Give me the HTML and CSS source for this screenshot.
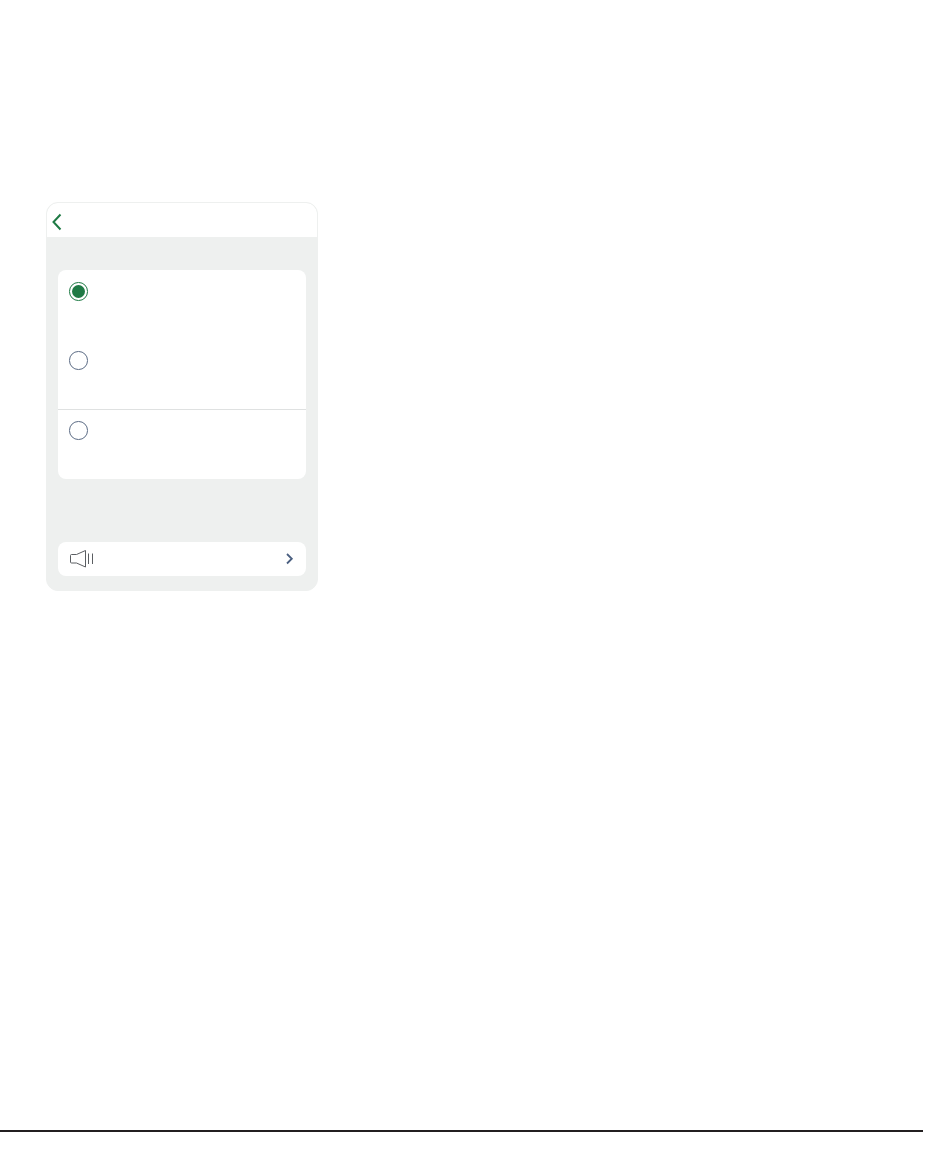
FILE: index.html
```html
<!DOCTYPE html>
<html lang="en">
<head>
<meta charset="utf-8">
<title>Settings</title>
<link rel="stylesheet" href="styles.css">
</head>
<body>
<main class="page">
  <section class="phone">
    <header class="phone-head">
      <svg class="back" width="12" height="18" viewBox="0 0 12 18"><path d="M9.5 1.5 L2.5 9 L9.5 16.5" fill="none" stroke="#1f7a45" stroke-width="2"/></svg>
    </header>
    <div class="phone-body">
      <div class="panel options">
        <div class="option"><span class="radio radio-on"></span></div>
        <div class="option option-mid"><span class="radio"></span></div>
        <div class="option option-last"><span class="radio"></span></div>
      </div>
      <div class="panel sound">
        <svg class="speaker" width="24" height="18" viewBox="0 0 24 18"><path d="M1.5 4.5 H6.5 L15.5 0.5 V17 L6.5 13 H1.5 Q0.5 13 0.5 12 V5.5 Q0.5 4.5 1.5 4.5 Z M18.5 3.5 V14 M22.5 3.5 V14" fill="none" stroke="#5b5e62" stroke-width="1"/></svg>
        <svg class="chev" width="10" height="14" viewBox="0 0 10 14"><path d="M3 2 L7.8 6.75 L3 11.5" fill="none" stroke="#4a5f80" stroke-width="1.8"/></svg>
      </div>
    </div>
  </section>
  <div class="rule"></div>
</main>
</body>
</html>
```

FILE: styles.css
```css
html, body {
  margin: 0;
  background: #fff;
  font-family: "Liberation Sans", sans-serif;
}
.page {
  height: 1161px;
  padding-top: 202px;
  box-sizing: border-box;
  display: flex;
  flex-direction: column;
  overflow: hidden;
}
.phone {
  width: 272px;
  height: 389px;
  margin-left: 46px;
  box-sizing: border-box;
  border: 1px solid #eef0ef;
  border-radius: 12px;
  background: #eef0ef;
  display: flex;
  flex-direction: column;
  overflow: hidden;
}
.phone-head {
  height: 34px;
  flex: none;
  box-sizing: border-box;
  padding: 3px 0 0 4px;
  background: #fff;
  border-radius: 11px 11px 0 0;
  display: flex;
  align-items: center;
}
.phone-body {
  flex: 1;
  padding: 33px 11px 14px;
  display: flex;
  flex-direction: column;
  justify-content: space-between;
}
.panel {
  background: #fff;
  border-radius: 8px;
}
.options {
  height: 209px;
  display: flex;
  flex-direction: column;
}
.option {
  height: 69px;
  padding: 12px 0 0 11px;
  box-sizing: border-box;
  flex: none;
}
.option-mid {
  height: 71px;
  border-bottom: 1px solid #dfe1e1;
}
.option-last {
  padding-top: 11px;
}
.radio {
  display: block;
  width: 18.5px;
  height: 18.5px;
  box-sizing: border-box;
  border: 1px solid #5c6c85;
  border-radius: 50%;
  background: #fff;
}
.radio-on {
  border-color: #1f7a45;
  padding: 2px;
  background: #1f7a45 content-box;
}
.sound {
  height: 34px;
  flex: none;
  display: flex;
  align-items: center;
  justify-content: space-between;
  padding: 0 12px;
}
.rule {
  width: 923px;
  height: 2px;
  flex: none;
  margin-top: 539px;
  background: #231f20;
}
```
